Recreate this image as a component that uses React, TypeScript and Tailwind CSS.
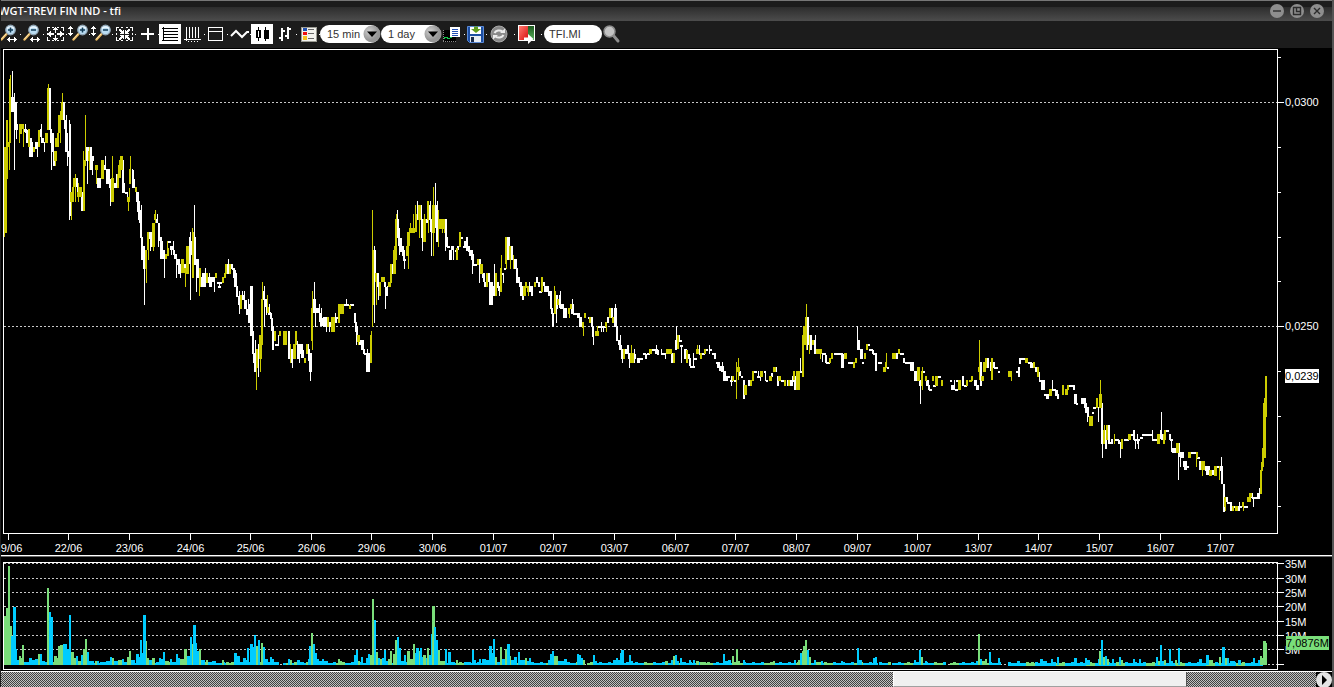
import React from "react";

/* Candle segments, one per item: x,width,top,bottom */
const FALLING = `
12,1,71,112 11,4,97,112 14,1,93,170 14,3,102,129 15,3,124,130 16,1,124,139 25,1,124,133 24,3,129,132 26,2,130,143 29,3,138,157 30,3,142,157
35,3,142,149 37,1,142,157 40,1,129,137 41,1,124,143 42,2,138,143 44,1,142,152 49,2,88,130 50,2,129,143 51,1,130,170 52,2,133,152 53,2,151,166
63,2,102,120 64,2,120,129 65,2,120,152 66,1,115,152 67,1,133,166 68,2,151,157 69,1,120,220 70,1,124,216 76,2,178,187 77,1,178,193
81,2,192,211 86,3,147,161 87,1,147,184 90,2,147,161 90,3,156,170 92,2,156,161 92,1,156,175 97,4,178,188 103,3,165,170 105,1,156,170
106,4,169,184 109,2,179,188 110,1,179,206 113,3,183,188 113,1,183,193 116,1,174,188 122,2,160,193 124,1,183,193 125,2,192,194 127,1,192,197
132,2,170,179 132,1,169,184 132,3,179,188 136,2,192,202 137,2,192,212 138,2,201,220 139,2,210,223 141,1,205,260 140,2,210,238 142,1,237,260
142,3,246,259 143,3,250,269 144,1,250,305 149,3,232,239 150,1,232,251 151,2,237,247 156,2,219,223 157,1,214,223 158,2,223,238 159,3,237,241
158,1,223,247 160,3,241,259 162,3,250,259 164,1,250,278 168,3,241,243 170,4,246,250 171,1,246,255 173,1,241,255 173,2,250,255 174,3,254,259
176,4,259,265 176,1,259,278 178,3,264,274 180,1,264,278 183,3,264,269 188,3,246,264 189,1,237,264 190,1,232,300 191,2,241,255 194,2,237,265
194,1,205,265 196,3,259,268 196,1,259,292 197,2,264,278 201,4,277,287 202,1,273,287 205,1,268,287 203,2,273,287 208,4,277,283 209,1,273,287
209,3,277,287 212,3,277,282 214,1,277,292 217,5,282,284 218,3,286,288 219,1,283,288 228,1,259,274 227,2,264,274 231,2,264,269 232,3,268,270
233,3,270,278 234,3,273,287 236,2,286,297 238,2,296,305 239,1,291,314 242,3,295,300 242,1,291,300 244,1,291,300 244,3,300,309 246,1,300,314
246,3,309,315 248,3,304,323 248,1,299,323 250,3,286,336 252,2,331,354 253,2,353,363 254,3,353,372 255,1,340,372 258,1,344,377
263,2,291,300 264,1,286,327 265,2,299,307 266,1,299,315 268,3,312,315 269,1,304,315 270,2,313,319 271,2,318,331 272,2,326,350 275,4,344,346
278,1,335,346 288,2,331,359 291,2,349,363 292,1,349,368 296,2,341,345 297,3,344,359 299,1,344,363 299,4,344,354 301,3,350,358 307,2,349,354
308,1,344,361 308,2,349,361 309,3,353,372 310,1,353,381 313,3,299,313 314,1,282,313 315,1,299,327 316,4,308,313 319,1,304,313 319,3,313,322
321,1,308,322 320,3,318,326 323,3,317,327 324,4,317,326 326,1,317,332 329,3,322,327 329,1,322,332 331,1,317,327 334,3,317,323 335,1,313,323
336,2,317,319 343,6,304,306 346,1,299,306 350,4,304,306 354,2,313,323 355,2,322,332 356,2,326,335 356,1,326,345 359,4,340,345 361,3,340,350
363,2,349,354 364,3,353,355 366,4,353,372 367,1,349,372 374,1,246,323 374,2,250,274 377,2,273,287 378,1,273,300 384,2,282,287 385,2,287,296
385,1,287,309 387,1,286,296 392,3,264,274 397,1,210,238 397,2,219,238 398,2,228,246 399,1,238,255 400,2,238,250 400,4,246,252 402,3,250,256
403,2,255,261 404,2,259,261 404,1,259,269 417,2,205,220 417,1,201,220 420,2,205,220 421,2,219,238 422,1,219,251 425,3,219,223 429,2,205,220
430,1,201,232 430,2,219,232 431,1,219,256 435,2,205,228 435,1,183,228 436,3,210,242 437,1,201,242 445,2,219,241 445,1,219,251 446,2,237,247
447,3,246,248 449,3,250,260 451,3,246,250 453,1,246,260 455,2,250,252 457,2,246,250 461,2,237,239 463,3,246,248 464,3,241,246 466,2,237,251
468,2,246,252 469,3,250,256 471,2,255,260 472,2,254,266 472,1,250,274 473,4,264,266 479,2,259,273 479,1,259,283 482,3,273,278 483,2,273,282
484,2,282,287 488,2,273,282 489,4,282,305 492,3,286,296 494,1,264,296 497,2,282,288 498,2,286,291 499,1,286,296 502,2,273,275 503,1,273,283
504,2,268,270 507,3,237,260 511,2,246,260 514,3,259,269 516,2,268,283 517,3,277,283 519,3,282,287 520,3,286,296 522,2,295,300 529,4,286,292
529,1,282,292 531,2,286,296 536,2,277,283 538,2,282,287 539,3,291,293 543,2,282,286 544,3,286,292 546,3,286,292 548,3,291,296 550,2,291,309
551,2,308,314 552,2,313,327 556,2,295,309 556,1,295,323 559,2,295,308 560,1,291,308 560,4,304,309 563,4,308,318 571,3,304,314 572,1,299,314
573,6,313,315 577,3,313,318 579,3,317,327 588,2,317,319 591,2,317,327 592,2,326,337 593,1,326,345 598,8,326,328 601,1,322,332 603,1,326,332
607,2,317,323 611,2,308,318 614,3,308,327 615,1,304,327 616,2,326,341 618,3,340,345 619,3,345,350 620,1,335,350 621,2,349,359 622,1,349,363
625,3,349,354 627,2,345,354 628,1,349,359 629,1,353,368 633,3,354,359 634,1,349,363 637,3,358,363 640,3,358,360 643,3,353,355 645,2,354,359
647,3,353,355 652,6,349,351 655,2,349,354 656,1,345,354 657,2,350,355 661,5,353,355 661,1,349,355 665,1,353,359 671,3,353,363 675,2,340,350
676,1,326,350 679,3,340,342 679,1,335,342 680,3,345,347 681,1,345,363 684,3,349,359 687,3,354,359 689,2,358,366 690,5,366,368 693,1,353,368
694,3,358,360 699,2,353,355 699,1,345,355 702,3,353,355 705,3,349,351 709,1,345,354 709,3,349,351 712,4,353,355 714,2,354,359 716,4,362,364
717,3,362,368 719,3,366,371 722,1,362,372 721,3,366,372 723,3,371,381 725,3,376,381 727,3,376,378 730,3,380,382 731,1,376,386 734,2,380,382
739,2,371,376 741,2,376,378 743,2,380,399 748,2,380,386 754,3,371,373 757,3,376,378 758,1,371,378 760,1,376,381 764,2,371,373 765,1,371,381
766,2,380,382 771,2,373,377 776,1,367,372 777,2,376,386 781,3,380,382 787,2,380,386 790,3,380,386 792,1,376,386 792,3,380,382 794,2,376,390
800,2,371,373 800,1,358,373 807,2,317,345 807,1,317,350 810,2,335,350 814,2,340,354 815,1,335,354 822,4,353,355 822,1,353,362 825,2,355,363
826,4,362,364 834,9,353,355 841,3,354,368 848,5,362,364 857,1,326,350 858,2,340,350 860,3,349,359 862,2,362,364 868,2,344,346 869,4,349,351
872,2,350,354 873,4,353,355 875,2,354,371 878,4,362,364 887,2,367,369 896,2,353,359 900,4,353,355 903,2,358,363 905,8,362,364 910,4,362,371
914,3,371,381 919,2,380,386 920,1,380,404 923,2,371,373 926,3,380,386 928,2,385,390 929,3,389,391 933,3,385,387 938,3,376,378 950,2,380,382
951,4,385,390 955,3,389,391 954,1,380,390 956,2,380,382 962,2,376,386 964,3,385,387 974,3,380,386 976,3,385,390 980,2,362,386 987,2,358,368
990,2,362,371 993,2,362,368 994,4,367,369 998,2,371,373 1016,3,371,373 1018,2,367,377 1019,2,358,364 1021,4,358,360 1028,4,362,364 1030,3,363,368
1035,4,367,372 1039,1,372,381 1039,6,380,382 1041,4,380,390 1044,4,394,396 1046,3,394,399 1051,5,389,391 1052,1,380,391 1055,3,390,396 1057,2,394,399
1068,7,385,387 1073,2,385,390 1074,3,394,404 1076,2,403,405 1081,5,398,404 1084,3,403,408 1085,4,407,413 1087,2,412,417 1087,1,412,422
1092,2,412,414 1093,3,407,409 1098,1,407,422 1101,2,403,444 1102,1,403,458 1105,2,430,449 1108,2,425,444 1109,4,442,444 1111,2,439,444
1115,4,439,441 1118,2,440,444 1119,3,442,444 1120,1,444,458 1124,5,439,441 1130,5,434,436 1133,2,430,440 1134,6,439,441 1135,1,439,449 1138,1,440,449
1137,1,434,444 1140,3,437,439 1142,11,434,436 1152,1,430,440 1152,5,439,441 1160,2,430,439 1161,1,412,439 1161,3,434,440 1165,4,430,432
1169,2,434,440 1170,3,439,441 1171,1,439,452 1172,5,448,453 1178,2,443,457 1178,1,443,480 1180,4,452,458 1180,1,452,467 1183,4,461,467
1184,3,465,470 1187,2,466,468 1190,7,452,454 1197,3,457,459 1199,3,461,470 1205,3,466,471 1206,4,466,475 1211,4,470,475 1216,4,466,468
1220,3,466,471 1221,1,457,484 1221,2,470,484 1223,2,484,512 1225,3,497,502 1227,5,502,504 1230,2,502,511 1231,8,506,508 1238,2,506,511
1239,3,506,508 1239,1,502,508 1244,4,506,508 1251,2,493,498 1253,1,497,507 1252,7,497,499 1257,2,493,499 1259,1,488,499`;

const RISING = `
4,1,228,237 4,3,147,233 6,2,120,179 8,1,142,147 9,1,142,170 9,2,79,143 10,1,75,143 19,5,124,129 19,3,129,134 19,1,129,143 23,1,124,147
28,2,129,147 33,2,147,152 38,2,130,147 45,3,133,143 47,2,88,130 48,1,84,130 54,3,151,161 55,1,151,166 55,4,138,147 57,2,133,147 58,3,115,133
60,1,115,143 60,3,111,120 61,2,102,120 62,1,93,120 70,3,192,202 71,1,192,220 72,2,187,202 73,3,178,187 75,1,174,202 77,4,192,197 78,1,183,202
79,3,187,197 83,1,151,211 83,2,160,211 85,1,115,166 88,2,151,161 89,1,147,170 95,3,165,170 96,1,165,184 101,3,160,179 111,3,178,202 112,1,156,202
117,2,174,188 118,3,165,178 119,3,160,170 120,3,156,170 127,3,197,202 128,1,197,211 129,1,188,202 129,2,169,184 130,1,156,184 135,2,187,192
145,2,250,269 146,1,250,283 147,2,232,250 148,1,232,260 152,3,223,247 153,1,223,251 154,2,214,220 155,1,210,223 165,2,254,259 167,2,248,256
167,1,241,256 181,3,259,273 184,4,268,273 185,1,268,287 186,3,246,274 192,2,232,278 192,1,228,278 199,2,268,287 199,1,268,296 206,2,273,283
215,2,273,278 222,2,277,283 224,2,273,278 225,2,264,274 229,2,264,274 240,2,295,309 256,2,349,368 256,1,349,390 259,3,335,359 260,1,335,372
261,2,299,345 262,1,282,345 267,1,295,313 267,2,307,313 274,2,331,341 279,2,331,336 283,4,331,345 290,1,344,363 293,3,344,359 295,2,331,345
304,2,358,363 306,2,344,354 311,2,308,341 312,1,291,350 327,2,317,327 331,4,317,332 338,2,304,323 339,5,304,314 349,2,305,309 357,3,335,342
358,1,335,345 370,2,335,363 371,1,331,363 372,1,210,327 372,2,250,305 375,2,273,282 376,1,273,305 379,2,282,296 381,4,277,282 388,3,282,287
390,2,264,283 393,3,250,274 394,1,246,274 395,2,219,260 396,1,214,260 406,3,246,256 407,3,232,246 408,1,232,269 409,6,228,233 410,1,223,233
413,1,214,228 415,2,214,232 415,1,205,232 418,3,205,220 419,1,205,238 423,3,219,242 424,1,214,242 427,2,201,220 428,1,201,233 432,3,205,233
433,1,187,256 438,7,219,229 438,1,210,247 442,1,229,233 444,1,229,233 456,2,248,260 459,2,232,247 477,2,259,265 480,3,264,274 486,2,273,287
495,2,273,296 500,2,268,292 501,1,255,292 505,2,237,264 506,1,237,269 509,2,246,260 510,1,246,269 513,1,255,269 523,3,286,296 525,2,282,288
527,2,286,292 528,1,286,296 534,2,282,287 541,2,277,292 554,1,286,314 555,1,291,314 557,2,299,305 568,2,308,314 569,1,308,318 570,2,304,309
582,2,322,328 583,1,322,336 584,2,313,318 589,2,317,323 595,4,331,336 597,1,326,336 605,2,322,327 606,1,322,332 609,2,308,318 612,2,317,323
623,2,349,359 630,4,353,363 631,1,345,363 649,3,349,354 666,6,349,354 673,2,353,363 677,2,335,349 686,2,350,363 696,3,349,354 697,1,345,354
700,2,353,359 704,2,349,354 732,2,376,381 736,1,362,399 737,3,367,372 738,1,358,380 744,3,385,395 750,2,380,386 752,2,371,381 760,3,371,377
769,3,376,381 773,3,367,372 778,3,376,381 784,2,380,386 788,2,380,386 793,2,371,380 796,4,371,390 802,2,335,377 803,3,326,345 805,2,317,327
806,1,304,350 809,1,335,354 812,2,340,345 816,6,349,354 820,1,349,359 829,2,358,363 831,2,353,359 844,3,353,359 853,2,362,368 855,2,358,363
864,2,353,359 866,2,344,350 883,3,367,372 885,2,362,368 886,1,353,368 892,4,353,359 898,2,349,354 917,3,367,381 921,2,371,386 922,1,367,390
925,2,376,381 932,2,376,381 935,3,376,386 941,2,380,386 958,3,380,390 966,2,380,386 969,3,380,382 971,2,376,381 979,1,340,380 978,2,367,372
981,3,376,381 983,3,362,372 985,2,358,368 991,2,358,380 1008,3,371,377 1011,1,371,381 1025,3,358,363 1033,2,362,368 1037,2,367,377 1049,3,389,396
1062,2,385,395 1065,3,389,395 1067,2,385,390 1089,4,416,426 1096,2,398,408 1099,3,394,408 1100,1,380,408 1103,2,430,444 1104,1,425,444
1106,2,425,440 1114,1,434,444 1121,2,439,449 1128,3,434,440 1157,3,434,444 1163,2,434,444 1164,2,430,440 1176,3,443,453 1188,3,452,458
1196,2,452,458 1196,1,452,467 1201,4,461,470 1202,1,461,476 1209,3,470,476 1214,3,466,476 1219,1,466,480 1224,2,497,507 1225,1,497,511
1232,2,506,511 1235,3,506,511 1242,2,502,507 1243,1,502,511 1247,4,497,502 1249,3,493,497 1260,2,470,494 1261,2,462,471 1262,2,448,467
1263,2,403,458 1264,2,398,458 1265,2,376,417`;

/* Volume bars, one per item: x,width,top */
const VOLUME_UP = `
4,1,657 4,2,616 6,2,608 8,2,566 10,2,626 19,2,656 21,1,658 22,2,645 38,2,654 47,2,588 54,3,656 57,1,658 58,2,646 60,3,645 71,3,652 74,2,658
78,3,661 83,2,649 85,2,639 95,2,661 112,2,658 118,4,660 127,2,657 129,2,651 146,1,641 147,2,658 152,3,658 165,4,661 180,4,659 184,3,649
192,1,644 199,2,649 206,2,660 222,2,660 226,3,662 256,2,646 261,2,643 290,2,660 294,3,662 311,2,633 338,2,659 340,2,661 358,2,661 370,2,655
372,2,599 376,2,652 380,2,659 388,2,659 390,2,651 393,2,654 395,2,640 407,3,651 410,3,659 413,2,644 418,2,651 423,3,655 427,2,648 432,3,606
438,2,650 440,5,661 456,2,660 495,2,657 500,2,647 505,2,649 510,1,656 525,2,658 554,4,656 583,2,660 665,3,661 673,2,656 696,3,661 700,6,662
732,2,656 736,2,649 738,2,661 773,2,661 798,2,660 802,1,651 803,2,646 805,2,640 809,2,657 816,5,662 921,2,657 978,2,634 982,3,661 985,2,659
1031,3,662 1099,2,651 1103,2,657 1107,2,659 1121,2,660 1158,2,661 1164,2,660 1175,2,660 1209,4,660 1219,2,657 1225,2,658 1260,2,656 1262,1,658
1263,3,641 1266,1,643`;

const VOLUME_DOWN = `
11,2,636 13,3,607 16,1,649 17,2,660 24,5,662 29,3,658 32,3,660 35,3,659 40,2,654 42,3,661 45,2,662 49,2,612 51,2,617 63,4,644 67,2,649 69,2,615
76,2,656 81,2,655 87,2,652 89,5,661 97,2,661 100,6,662 106,4,661 110,2,657 114,4,661 122,2,659 124,3,662 131,4,660 136,3,654 139,1,657 140,2,640
142,1,653 143,3,615 149,3,660 156,3,662 159,2,658 161,2,659 163,2,652 170,2,659 172,4,662 176,2,654 178,2,658 187,3,656 190,2,637 193,3,625
196,1,643 197,2,651 201,4,660 208,4,662 212,4,661 234,3,653 237,3,656 243,3,658 246,1,660 247,2,648 250,3,644 253,1,647 254,2,635 258,2,640
263,2,647 265,3,659 270,2,657 272,2,659 274,4,662 288,2,659 297,3,660 300,4,662 308,1,659 309,2,646 313,2,644 315,2,653 317,2,659 319,3,661
322,2,659 324,4,661 354,2,655 356,2,650 361,2,657 366,2,658 368,2,654 374,2,620 378,2,658 382,2,658 384,2,650 386,2,661 397,2,637 399,2,648
401,3,661 404,2,655 415,1,653 416,3,648 420,2,648 422,1,657 426,1,658 429,2,655 431,1,634 434,2,627 436,2,640 445,2,649 448,3,652 451,4,662
464,4,662 472,2,650 474,2,660 479,2,659 482,4,659 486,3,660 489,3,646 492,1,653 493,2,639 497,3,662 502,3,659 507,3,644 511,3,660 514,3,657
518,2,652 520,5,660 527,2,661 529,2,658 548,2,660 550,2,654 552,2,651 558,6,661 564,3,659 577,2,654 579,2,655 581,2,658 593,2,655 595,2,661
613,3,660 616,2,658 618,2,660 620,1,653 621,3,650 629,2,655 631,2,661 671,2,660 675,2,655 677,2,661 680,2,658 682,4,662 689,2,660 693,2,660
723,2,654 725,3,661 728,3,660 743,2,660 794,2,660 800,2,653 807,2,650 814,2,660 821,2,661 841,2,661 857,2,648 859,3,660 873,2,658 875,2,657
914,2,660 919,2,650 925,2,661 976,2,661 980,2,659 989,2,652 998,2,658 1017,3,661 1040,3,659 1043,4,661 1051,2,659 1057,2,657 1074,3,658 1085,2,658
1087,3,660 1098,1,659 1101,2,640 1105,2,656 1112,2,659 1119,2,657 1133,2,659 1139,2,659 1156,2,657 1160,2,645 1162,2,661 1169,2,649 1171,2,661
1178,2,648 1199,3,659 1206,3,655 1222,3,647 1227,2,658 1230,5,661 1238,3,660 1253,2,658 1258,2,660`;

/* Spans with thin trading: a low strip of bars along the zero line */
const QUIET_SPANS = [
  [24, 277], [283, 287], [288, 584], [587, 877], [879, 889], [892, 945], [950, 1000], [1008, 1262],
];

const PLOT = { left: 4, width: 1273 };
const PRICE = { top: 50, height: 483 };
const VOLUME = { top: 563, height: 106, zero: 665 };

function boxes(data: string, base?: number) {
  return data
    .trim()
    .split(/\s+/)
    .map((item) => {
      const [x, w, top, bottom] = item.split(",").map(Number);
      return `M${x} ${top}h${w}V${bottom ?? base}h${-w}z`;
    })
    .join("");
}

function quiet(parity: number) {
  let d = "";
  for (const [from, to] of QUIET_SPANS) {
    for (let x = from, i = from; x < to; x += 3, i += 7) {
      const isUp = (i * 13) % 10 < 3 ? 1 : 0;
      if (isUp !== parity) continue;
      const top = 662 + ((i * 5) % 3 === 0 ? 0 : 1);
      d += `M${x} ${top}h3V${665 + ((i * 11) % 7 === 0 ? 1 : 0)}h-3z`;
    }
  }
  return d;
}

const DATES: [string, number][] = [
  ["19/06", 8], ["22/06", 68], ["23/06", 129], ["24/06", 190], ["25/06", 250], ["26/06", 311], ["29/06", 371],
  ["30/06", 432], ["01/07", 493], ["02/07", 553], ["03/07", 614], ["06/07", 675], ["07/07", 735], ["08/07", 796],
  ["09/07", 857], ["10/07", 917], ["13/07", 978], ["14/07", 1038], ["15/07", 1099], ["16/07", 1160], ["17/07", 1220],
];
const PRICE_TICKS: [number, string?][] = [
  [57], [102, "0,0300"], [147], [192], [237], [281], [326, "0,0250"], [371], [416], [461], [506],
];
const VOLUME_TICKS: [number, string?][] = [
  [563, "35M"], [578, "30M"], [592, "25M"], [606, "20M"], [621, "15M"], [635, "10M"], [649, "5M"], [664],
];

const pct = (v: number, start: number, size: number) => `${((v - start) / size) * 100}%`;

function Gridline({ y }: { y: number }) {
  return <path d={`M4 ${y + 0.5}H1277`} stroke="#c8c8c8" strokeWidth="1" strokeDasharray="2 2" />;
}

function PricePane() {
  return (
    <section aria-label="Price" className="grid min-h-0 flex-1 grid-cols-[1fr_54px] grid-rows-[1fr_21px] overflow-hidden bg-black pt-px pl-[2px]">
      <div className="relative min-h-0 border border-white">
        <svg
          className="absolute inset-0 h-full w-full"
          viewBox="4 50 1273 483"
          preserveAspectRatio="none"
          shapeRendering="crispEdges"
        >
          <Gridline y={102} />
          <Gridline y={326} />
          <path d={boxes(FALLING)} fill="#ffffff" />
          <path d={boxes(RISING)} fill="#cccc00" />
        </svg>
      </div>
      <div className="relative my-px">
        {PRICE_TICKS.map(([y, label]) => (
          <div key={y} className="absolute left-0 flex h-px items-center" style={{ top: pct(y, PRICE.top, PRICE.height) }}>
            <span className={label ? "h-px w-[6px] bg-white" : "h-px w-[3px] bg-white"} />
            {label && <span className="pb-[2px] pl-px leading-3">{label}</span>}
          </div>
        ))}
        <div
          className="absolute left-[7px] h-[14px] w-[34px] bg-white leading-[14px] text-black"
          style={{ top: pct(369, PRICE.top, PRICE.height) }}
        >
          0,0239
        </div>
      </div>
      <div className="relative mx-px">
        {DATES.map(([label, x]) => (
          <div
            key={label}
            className="absolute top-0 flex w-10 -translate-x-1/2 flex-col items-center"
            style={{ left: pct(x + 0.5, PLOT.left, PLOT.width) }}
          >
            <span className="h-[6px] w-px bg-white" />
            <span className="mt-[2px] leading-3">{label}</span>
          </div>
        ))}
      </div>
    </section>
  );
}

function VolumePane() {
  return (
    <section aria-label="Volume" className="grid h-[114px] shrink-0 grid-cols-[1fr_54px] overflow-hidden bg-black pt-[5px] pb-px pl-[2px]">
      <div className="relative border border-white">
        <svg
          className="absolute inset-0 h-full w-full"
          viewBox="4 563 1273 106"
          preserveAspectRatio="none"
          shapeRendering="crispEdges"
        >
          {VOLUME_TICKS.map(([y]) => (
            <Gridline key={y} y={y} />
          ))}
          <path d={quiet(0)} fill="#00ccff" />
          <path d={quiet(1)} fill="#7ade7a" />
          <path d={boxes(VOLUME_UP, VOLUME.zero)} fill="#7ade7a" />
          <path d={boxes(VOLUME_DOWN, VOLUME.zero)} fill="#00ccff" />
        </svg>
      </div>
      <div className="relative my-px">
        {VOLUME_TICKS.map(([y, label]) => (
          <div key={y} className="absolute left-0 flex h-px items-center" style={{ top: pct(y, VOLUME.top, VOLUME.height) }}>
            <span className="h-px w-[6px] bg-white" />
            {label && <span className="pl-px leading-3">{label}</span>}
          </div>
        ))}
        <div
          className="absolute left-[8px] h-[14px] w-[43px] bg-[#7ade7a] leading-[14px] text-black"
          style={{ top: pct(636, VOLUME.top, VOLUME.height) }}
        >
          7,0876M
        </div>
      </div>
    </section>
  );
}

function Tool({ label, active, dot = true, children }: { label: string; active?: boolean; dot?: boolean; children: React.ReactNode }) {
  return (
    <button type="button" aria-label={label} aria-pressed={active} className="h-5 w-[23px] shrink-0">
      <svg viewBox="0 0 23 20" className="h-5 w-[23px]" fill="none" stroke={active ? "#000" : "#fff"} shapeRendering="crispEdges">
        {active && <rect x="0" y="0" width="22" height="20" fill="#fff" stroke="none" />}
        {children}
        {dot && !active && <rect x="22" y="10" width="1" height="1" fill="#fff" stroke="none" />}
      </svg>
    </button>
  );
}

function Lens({ x = 0, minus }: { x?: number; minus?: boolean }) {
  return (
    <g shapeRendering="auto" transform={`translate(${x} 0)`}>
      <path d="M8.5 10L3.500 15.500" stroke="#e9b65c" strokeWidth="2.400" strokeLinecap="round" />
      <path d="M8 10L3.500 15" stroke="#fbe6b4" strokeWidth="1" strokeLinecap="round" />
      <circle cx="12.500" cy="6" r="4.800" fill="#b9dcf2" stroke="#8fa3b2" strokeWidth="1.200" />
      <path d="M9 4.500a4 3 0 0 1 7 0" stroke="#eef8ff" strokeWidth="1.400" />
      <path d={minus ? "M10 6h5" : "M10 6h5M12.500 3.500v5"} stroke="#123a55" strokeWidth="1.500" />
    </g>
  );
}

const H_ARROW = "M9 15.5h10M11.5 13v5M10.5 14v3M16.5 13v5M17.5 14v3";
const V_ARROW = "M3.5 2v10M1 4.5h5M2 3.5h3M1 9.5h5M2 10.5h3";
const FRAME = "M3.500 7V3.500H6M17 3.500h2.500V7M19.500 13v3.500H17M6 16.500H3.500V13M8 3.500h2M13 3.500h2M8 16.500h2M13 16.500h2M3.500 9v2M19.500 9v2";

function DropDown({ label, options }: { label: string; options: string[] }) {
  return (
    <label className="relative flex h-[18px] w-[61px] shrink-0 items-center">
      <span className="sr-only">{label}</span>
      <select className="h-[18px] w-[60px] appearance-none rounded-full bg-white pl-[7px] text-[11px] leading-[18px] text-[#333333] outline-none">
        {options.map((o) => (
          <option key={o}>{o}</option>
        ))}
      </select>
      <svg viewBox="0 0 18 18" className="pointer-events-none absolute top-0 right-0 size-[18px]">
        <defs>
          <radialGradient id="knob" cx="35%" cy="35%">
            <stop offset="0" stopColor="#d0d0d0" />
            <stop offset="1" stopColor="#969696" />
          </radialGradient>
        </defs>
        <circle cx="9" cy="9" r="8.500" fill="url(#knob)" />
        <path d="M4 6.500h10L9 12z" fill="#000" />
      </svg>
    </label>
  );
}

function Toolbar() {
  return (
    <div role="toolbar" aria-label="Chart tools" className="flex h-[27px] shrink-0 items-center bg-[#1c1c1c] pb-px">
      <div className="-ml-[3px] flex">
        <Tool label="Zoom in time"><Lens /><path d={H_ARROW} /></Tool>
        <Tool label="Zoom out time"><Lens minus /><path d={H_ARROW} /></Tool>
        <Tool label="Expand">
          <path d={FRAME} />
          <path
            d="M11 3h1v1h1v1h1v1h-2v3h-1V6H9V5h1V4h1zM11 17h1v-1h1v-1h1v-1h-2v-3h-1v3H9v1h1v1h1zM4 10v-1h1V8h1V7h1v2h3v2H7v2H6v-1H5v-1H4zM19 10v-1h-1V8h-1V7h-1v2h-3v2h3v2h1v-1h1v-1h1z"
            fill="#fff"
            stroke="none"
          />
        </Tool>
        <Tool label="Zoom in price"><path d={V_ARROW} /><Lens x={3} /></Tool>
        <Tool label="Zoom out price"><path d={V_ARROW} /><Lens x={3} minus /></Tool>
        <Tool label="Fit">
          <path d={FRAME} />
          <path
            d="M6 5h2v1h1v1h1V6h1v4H7V9h1V8H7V7H6zM17 5h-2v1h-1v1h-1V6h-1v4h4V9h-1V8h1V7h1zM6 16h2v-1h1v-1h1v1h1v-4H7v1h1v1H7v1H6zM17 16h-2v-1h-1v-1h-1v1h-1v-4h4v1h-1v1h1v1h1z"
            fill="#fff"
            stroke="none"
          />
        </Tool>
        <Tool label="Crosshair"><path d="M5 10h5M13 10h5M11.500 4v5M11.500 11v5M10 10h3" strokeWidth="2" /></Tool>
        <Tool label="Horizontal grid" active><path d="M4.500 3v14M3 4.500h16M5 7.500h14M5 10.500h14M5 13.500h14M3 16.500h16" /></Tool>
        <Tool label="Vertical grid"><path d="M4.500 3v14M7.500 3v11M10.500 3v11M13.500 3v11M16.500 3v11M2 15.500h17M6.500 17v1M9.500 17v1M12.500 17v1M15.500 17v1" /></Tool>
        <Tool label="Window"><path d="M3.500 3.500h14v13h-14zM4 7.500h14" /></Tool>
        <Tool label="Line chart"><path d="M3 12l5-5 6 6 5-5 2 0" strokeWidth="2" shapeRendering="auto" /></Tool>
        <Tool label="Candles" active>
          <path d="M7.500 3v14M14.500 3v14" />
          <path d="M6 6.500h3v7H6z" fill="#fff" strokeWidth="1.500" />
          <path d="M13 6h4v8h-4z" fill="#000" />
        </Tool>
        <Tool label="Bars"><path d="M8 4v13M14 3v12M5 14h3M8 7h3M11 12h3M14 5h3" strokeWidth="2" /></Tool>
        <Tool label="Indicators">
          <rect x="4" y="3" width="15" height="14" fill="#f2f2ee" stroke="#9c9c94" />
          <g stroke="none">
            <rect x="6" y="4" width="4" height="3" fill="#1f4fae" />
            <rect x="6" y="8" width="4" height="3" fill="#ef1010" />
            <rect x="6" y="12" width="4" height="4" fill="#f5c21c" />
          </g>
          <path d="M11 5.500h6M11 9.500h6M11 14.500h6" stroke="#666" />
        </Tool>
      </div>
      <div className="flex">
        <DropDown label="Interval" options={["15 min", "30 min", "60 min"]} />
        <DropDown label="Period" options={["1 day", "5 days", "1 month"]} />
      </div>
      <button type="button" aria-label="Report" className="h-5 w-[24px] shrink-0">
        <svg viewBox="0 0 24 20" className="h-5 w-6" shapeRendering="crispEdges">
          <rect x="1" y="6" width="13" height="12" fill="#000" />
          <path d="M1 15l3-2 3 2 4-3 3 1" stroke="#13c94d" fill="none" />
          <path d="M1.500 6v12M1 17.500h13" stroke="#888" strokeDasharray="1 1" />
          <rect x="8" y="3" width="10" height="10" fill="#fff" />
          <path d="M10 5.500h6M10 7.500h6M10 9.500h6M10 11.500h6" stroke="#2450b4" />
          <rect x="22" y="10" width="1" height="1" fill="#fff" />
        </svg>
      </button>
      <button type="button" aria-label="Save" className="h-5 w-[23px] shrink-0">
        <svg viewBox="0 0 23 20" className="h-5 w-[23px]">
          <path d="M1.500 2.500h16v16h-14l-2-2z" fill="#1d4fa3" stroke="#5b8ad6" />
          <path d="M4 3h11v7H4z" fill="#fff" />
          <path d="M8 2.500h4v2.500h3l-5 4-5-4h3z" fill="#5f9c1d" />
          <path d="M4 12h11v6H4z" fill="#e8edf5" />
          <path d="M5 13h3v5H5z" fill="#1a2a4a" />
          <rect x="20" y="10" width="1" height="1" fill="#fff" />
        </svg>
      </button>
      <button type="button" aria-label="Refresh" className="h-5 w-[28px] shrink-0">
        <svg viewBox="0 0 28 20" className="h-5 w-7" fill="none">
          <circle cx="10" cy="10" r="8" fill="#8a8a8a" stroke="#a8a8a8" />
          <path d="M5.500 9a5 4 0 0 1 8-1.500M14.500 11a5 4 0 0 1-8 1.500" stroke="#ececec" strokeWidth="2" />
          <path d="M11 9h5V4.500zM9 11H4v4.500z" fill="#ececec" />
          <rect x="25" y="10" width="1" height="1" fill="#fff" />
        </svg>
      </button>
      <button type="button" aria-label="Trade" className="h-5 w-[27px] shrink-0">
        <svg viewBox="0 0 27 20" className="h-5 w-[27px]">
          <defs>
            <linearGradient id="sell" x1="0" y1="0" x2="1" y2="1">
              <stop offset="0" stopColor="#ff7a70" />
              <stop offset="1" stopColor="#d80f0f" />
            </linearGradient>
            <linearGradient id="buy" x1="0" y1="0" x2="0" y2="1">
              <stop offset="0" stopColor="#1d5a1f" />
              <stop offset="1" stopColor="#57b05a" />
            </linearGradient>
          </defs>
          <rect x="1" y="1" width="17" height="16" fill="#fff" />
          <rect x="2" y="2" width="9" height="14" fill="url(#sell)" />
          <rect x="11" y="2" width="6" height="14" fill="url(#buy)" />
          <path d="M7 13.500h4V10l5.500 5-5.500 5v-3.500H7z" fill="#fff" />
          <rect x="24" y="10" width="1" height="1" fill="#fff" />
        </svg>
      </button>
      <input
        aria-label="Symbol"
        defaultValue="TFI.MI"
        className="h-[18px] w-[58px] shrink-0 rounded-full bg-white pl-[5px] text-[11px] leading-4 text-[#333333] outline-none"
      />
      <button type="button" aria-label="Search" className="h-5 w-5 shrink-0">
        <svg viewBox="0 0 20 20" className="size-5">
          <path d="M11 11l5 6" stroke="#8f8f8f" strokeWidth="3" strokeLinecap="round" />
          <circle cx="7.500" cy="7.500" r="5.500" fill="#c4c4c4" stroke="#8c8c8c" strokeWidth="1.500" />
        </svg>
      </button>
    </div>
  );
}

function TitleBar() {
  const glyphs: [string, string][] = [
    ["Minimize", "M3 7h8"],
    ["Restore", "M3.500 3.500h7v7h-7zM6.500 3.500v4h4"],
    ["Close", "M4 4l6 6M10 4l-6 6"],
  ];
  return (
    <header className="flex h-[21px] shrink-0 items-center justify-between border-t border-[#777777] bg-[linear-gradient(#1c1c1c_0_30%,#2e2e2e_32%,#4c4c4c)]">
      <h1 className="-ml-[2px] font-['Open_Sans',sans-serif] text-[11px] leading-4 font-semibold">WGT-TREVI FIN IND - tfi</h1>
      <div className="flex gap-[6px] pr-[8px]">
        {glyphs.map(([label, d]) => (
          <button key={label} type="button" aria-label={label} className="size-[14px]">
            <svg viewBox="0 0 14 14" className="size-[14px]" fill="none">
              <circle cx="7" cy="7" r="7" fill="#8e8e8e" />
              <path d={d} stroke="#2c2c2c" strokeWidth="1.400" />
            </svg>
          </button>
        ))}
      </div>
    </header>
  );
}

function ScrollBar() {
  return (
    <div
      role="scrollbar"
      aria-label="Chart history"
      aria-controls="chart"
      aria-orientation="horizontal"
      aria-valuenow={75}
      className="flex h-4 shrink-0 border-t border-white bg-black"
    >
      <div className="flex flex-1 bg-[repeating-conic-gradient(#404040_0_25%,#c0c0c0_0_50%)] bg-[length:2px_2px]">
        <div className="w-[67.8%]" />
        <div className="w-[22.4%] border-r border-b border-l border-r-[#555555] border-b-[#a0a0a0] border-l-white bg-[#f0f0f0]" />
      </div>
      <button type="button" aria-label="Scroll right" className="h-[15px] w-4">
        <svg viewBox="0 0 16 15" className="h-[15px] w-4">
          <circle cx="8" cy="8" r="8" fill="#e4e4e4" />
          <path d="M6 3v10l5-5z" fill="#000" />
        </svg>
      </button>
    </div>
  );
}

export default function App() {
  return (
    <main className="flex h-screen flex-col overflow-hidden border-r-2 border-l border-r-[#555555] border-l-[#1c1c1c] bg-black font-['Liberation_Sans',Arial,sans-serif] text-[11px] text-white">
      <TitleBar />
      <Toolbar />
      <div id="chart" className="flex min-h-0 flex-1 flex-col">
        <PricePane />
        <div className="h-[2px] shrink-0 border-b border-[#666666] bg-white" />
        <VolumePane />
      </div>
      <ScrollBar />
    </main>
  );
}
